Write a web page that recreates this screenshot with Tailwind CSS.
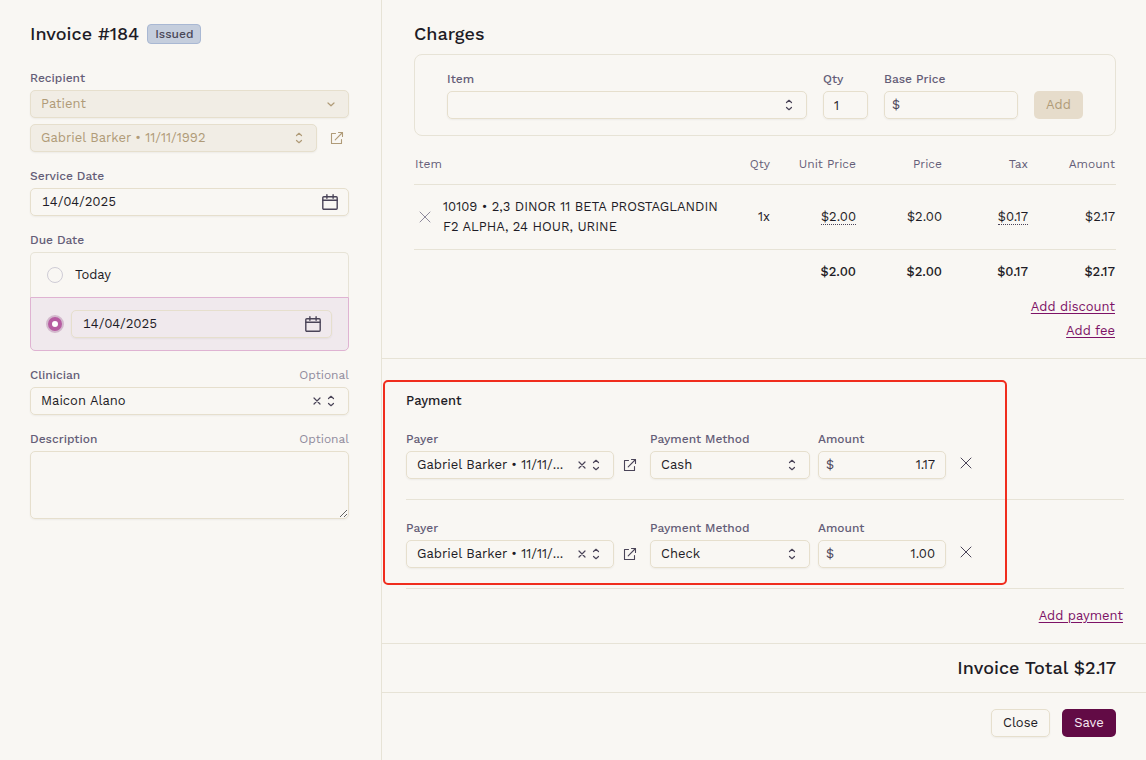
<!DOCTYPE html>
<html lang="en">
<head>
  <meta charset="UTF-8" />
  <meta name="viewport" content="width=device-width, initial-scale=1.0" />
  <title>Invoice #184</title>
  <script src="https://cdn.jsdelivr.net/npm/@tailwindcss/browser@4"></script>
</head>
<body class="flex min-h-screen bg-[#f9f7f3] font-['Work_Sans','Inter',sans-serif] text-[13px] leading-5 text-[#1e1c26]">

  <!-- Icons -->
  <svg class="hidden">
    <symbol id="icon-updown" viewBox="0 0 12 12" fill="none" stroke="currentColor" stroke-width="1.2" stroke-linecap="round" stroke-linejoin="round">
      <path d="M3.5 3.5 6 1.3l2.5 2.2M3.5 8.5 6 10.7l2.5-2.2" />
    </symbol>
    <symbol id="icon-down" viewBox="0 0 12 12" fill="none" stroke="currentColor" stroke-width="1.2" stroke-linecap="round" stroke-linejoin="round">
      <path d="M3 5 6 7.8l3-2.8" />
    </symbol>
    <symbol id="icon-clear" viewBox="0 0 12 12" fill="none" stroke="currentColor" stroke-width="1.2" stroke-linecap="round">
      <path d="M3 3l6 6M9 3l-6 6" />
    </symbol>
    <symbol id="icon-x" viewBox="0 0 12 12" fill="none" stroke="currentColor" stroke-width="1" stroke-linecap="round">
      <path d="M1 1l10 10M11 1 1 11" />
    </symbol>
    <symbol id="icon-open" viewBox="0 0 14 14" fill="none" stroke="currentColor" stroke-width="1.1" stroke-linecap="round" stroke-linejoin="round">
      <path d="M5.5 2.5H1.5V12.5H11.5V8.5M8.5 1.5h4v4M12.5 1.5 5.2 8.8" />
    </symbol>
    <symbol id="icon-calendar" viewBox="0 0 16 16" fill="none" stroke="currentColor" stroke-width="1.4" stroke-linecap="round" stroke-linejoin="round">
      <rect x="0.8" y="2.7" width="14.4" height="12.5" rx="1" />
      <path d="M0.8 6.3h14.4M4.9 0.7v3.6M11.1 0.7v3.6" />
    </symbol>
  </svg>

  <!-- Invoice details -->
  <aside class="w-1/3 shrink-0 border-r border-[#e7e3d6] pt-5 pr-8 pl-[30px]">
    <div class="mb-[22px] flex h-7 items-center gap-2">
      <h1 class="text-lg font-medium">Invoice #184</h1>
      <span class="rounded border border-[#a9b8d3] bg-[#c5cedd] px-[7px] text-xs leading-[18px] font-medium text-[#4a4858]">Issued</span>
    </div>

    <form class="flex flex-col gap-4">
      <div>
        <label for="recipient-type" class="mb-1 block text-xs leading-4 font-medium text-[#655e78]">Recipient</label>
        <div class="relative mb-1.5">
          <select id="recipient-type" disabled class="block h-7 w-full appearance-none rounded-[5px] border border-[#e6dfcd] bg-[#f1ede5] px-2.5 text-[#b09b78] opacity-100 shadow-xs">
            <option>Patient</option>
          </select>
          <svg class="pointer-events-none absolute top-2 right-3 size-3 text-[#b09b78]"><use href="#icon-down" /></svg>
        </div>
        <div class="flex items-center gap-2">
          <div class="relative flex-1">
            <select aria-label="Patient" disabled class="block h-7 w-full appearance-none rounded-[5px] border border-[#e6dfcd] bg-[#f1ede5] px-2.5 text-[#b09b78] opacity-100 shadow-xs">
              <option>Gabriel Barker • 11/11/1992</option>
            </select>
            <svg class="pointer-events-none absolute top-2 right-3 size-3 text-[#b09b78]"><use href="#icon-updown" /></svg>
          </div>
          <a href="#" aria-label="Open patient" class="flex w-6 justify-center text-[#b09b78]"><svg class="size-3.5"><use href="#icon-open" /></svg></a>
        </div>
      </div>

      <div>
        <label for="service-date" class="mb-1 block text-xs leading-4 font-medium text-[#655e78]">Service Date</label>
        <div class="flex h-7 items-center rounded-[5px] border border-[#e6dfcd] px-2.5 shadow-xs">
          <input id="service-date" type="text" value="14/04/2025" class="min-w-0 flex-1 pl-px tabular-nums outline-none" />
          <button type="button" aria-label="Pick service date" class="text-[#4a4458]"><svg class="size-4"><use href="#icon-calendar" /></svg></button>
        </div>
      </div>

      <fieldset>
        <legend class="mb-1 text-xs leading-4 font-medium text-[#655e78]">Due Date</legend>
        <label class="flex items-center gap-3 rounded-t-[5px] border border-b-0 border-[#e7e3d6] px-4 py-3">
          <input type="radio" name="due" class="size-4 appearance-none rounded-full border border-[#cfccd6]" />
          Today
        </label>
        <div class="flex items-center gap-2 rounded-b-[5px] border border-[#dfb3d2] bg-[#f0e9ed] px-4 py-3">
          <input type="radio" name="due" checked aria-label="Due on a date" class="size-4 appearance-none rounded-full border-[5px] border-[#b75ca2] bg-white outline-2 -outline-offset-1 outline-[#d3b9cd]" />
          <div class="flex h-7 flex-1 items-center rounded-[5px] border border-[#e6dfcd] px-2.5 shadow-xs">
            <input type="text" aria-label="Due date" value="14/04/2025" class="min-w-0 flex-1 pl-px tabular-nums outline-none" />
            <button type="button" aria-label="Pick due date" class="text-[#4a4458]"><svg class="size-4"><use href="#icon-calendar" /></svg></button>
          </div>
        </div>
      </fieldset>

      <div>
        <div class="mb-1 flex justify-between text-xs leading-4 text-[#8f8a9c]">
          <label for="clinician" class="font-medium text-[#655e78]">Clinician</label>
          <span>Optional</span>
        </div>
        <div class="relative">
          <select id="clinician" class="block h-7 w-full appearance-none rounded-[5px] border border-[#e6dfcd] px-2.5 shadow-xs">
            <option>Maicon Alano</option>
          </select>
          <button type="button" aria-label="Clear clinician" class="absolute top-2 right-[26px] text-[#4a4458]"><svg class="size-3"><use href="#icon-clear" /></svg></button>
          <svg class="pointer-events-none absolute top-2 right-3 size-3 text-[#4a4458]"><use href="#icon-updown" /></svg>
        </div>
      </div>

      <div>
        <div class="mb-1 flex justify-between text-xs leading-4 text-[#8f8a9c]">
          <label for="description" class="font-medium text-[#655e78]">Description</label>
          <span>Optional</span>
        </div>
        <textarea id="description" class="block h-[68px] w-full rounded-[5px] border border-[#e6dfcd] px-2.5 py-1 shadow-xs"></textarea>
      </div>
    </form>
  </aside>

  <main class="min-w-0 flex-1">
    <!-- Charges -->
    <section class="pt-5 pr-[30px] pb-[15px] pl-8">
      <h2 class="mb-1.5 text-lg leading-7 font-medium">Charges</h2>
      <form class="mb-2 flex items-end gap-4 rounded-lg border border-[#e7e3d6] px-8 py-4">
        <div class="flex-1">
          <label for="item" class="mb-1 block text-xs leading-4 font-medium text-[#655e78]">Item</label>
          <div class="relative">
            <select id="item" class="block h-7 w-full appearance-none rounded-[5px] border border-[#e6dfcd] px-2.5 shadow-xs">
              <option></option>
            </select>
            <svg class="pointer-events-none absolute top-2 right-3 size-3 text-[#4a4458]"><use href="#icon-updown" /></svg>
          </div>
        </div>
        <div>
          <label for="qty" class="mb-1 block text-xs leading-4 font-medium text-[#655e78]">Qty</label>
          <input id="qty" type="text" value="1" class="block h-7 w-[45px] rounded-[5px] border border-[#e6dfcd] px-2.5 leading-5 shadow-xs" />
        </div>
        <div>
          <label for="base-price" class="mb-1 block text-xs leading-4 font-medium text-[#655e78]">Base Price</label>
          <div class="flex h-7 w-[134px] items-center gap-1 rounded-[5px] border border-[#e6dfcd] px-[7px] shadow-xs">
            <span class="text-[#4a4458]">$</span>
            <input id="base-price" type="text" class="min-w-0 flex-1 outline-none" />
          </div>
        </div>
        <button type="button" disabled class="h-7 w-[49px] rounded-[5px] bg-[#e6dccb] text-[#b09b78]">Add</button>
      </form>

      <table class="w-full table-fixed text-right">
        <thead>
          <tr class="border-b border-[#e7e3d6] text-xs leading-4 text-[#655e78]">
            <th class="px-px py-3 text-left font-normal">Item</th>
            <th class="w-10 px-px py-3 font-normal">Qty</th>
            <th class="w-[86px] px-px py-3 font-normal">Unit Price</th>
            <th class="w-[86px] px-px py-3 font-normal">Price</th>
            <th class="w-[86px] px-px py-3 font-normal">Tax</th>
            <th class="w-[87px] px-px py-3 font-normal">Amount</th>
          </tr>
        </thead>
        <tbody>
          <tr class="border-b border-[#e7e3d6]">
            <td class="px-px py-3 text-left">
              <div class="flex items-center gap-3 pl-1">
                <button type="button" aria-label="Remove item" class="text-[#8f8a9c]"><svg class="size-3"><use href="#icon-x" /></svg></button>
                <span>10109 • 2,3 DINOR 11 BETA PROSTAGLANDIN F2 ALPHA, 24 HOUR, URINE</span>
              </div>
            </td>
            <td class="px-px">1x</td>
            <td class="px-px"><span class="border-b border-dotted border-[#4a4458]">$2.00</span></td>
            <td class="px-px">$2.00</td>
            <td class="px-px"><span class="border-b border-dotted border-[#4a4458]">$0.17</span></td>
            <td class="px-px">$2.17</td>
          </tr>
        </tbody>
        <tfoot>
          <tr class="font-medium">
            <td class="px-px py-3" colspan="3">$2.00</td>
            <td class="px-px">$2.00</td>
            <td class="px-px">$0.17</td>
            <td class="px-px">$2.17</td>
          </tr>
        </tfoot>
      </table>

      <div class="flex flex-col items-end pt-px pr-px leading-6 text-[#7d1266]">
        <a href="#" class="underline underline-offset-2">Add discount</a>
        <a href="#" class="underline underline-offset-2">Add fee</a>
      </div>
    </section>

    <!-- Payment -->
    <section class="relative border-t border-[#e7e3d6] pt-8 pr-[22px] pb-4 pl-6">
      <h3 class="font-medium">Payment</h3>

      <div class="flex items-end border-b border-[#e7e3d6] py-5">
        <div class="w-[208px]">
          <label for="payer-1" class="mb-1 block text-xs leading-4 font-medium text-[#655e78]">Payer</label>
          <div class="relative">
            <select id="payer-1" class="block h-7 w-full appearance-none rounded-[5px] border border-[#e6dfcd] pr-11 pl-2.5 shadow-xs">
              <option>Gabriel Barker • 11/11/...</option>
            </select>
            <button type="button" aria-label="Clear payer" class="absolute top-2 right-[26px] text-[#4a4458]"><svg class="size-3"><use href="#icon-clear" /></svg></button>
            <svg class="pointer-events-none absolute top-2 right-3 size-3 text-[#4a4458]"><use href="#icon-updown" /></svg>
          </div>
        </div>
        <a href="#" aria-label="Open payer" class="mr-2 ml-1 flex h-7 w-6 items-center justify-center text-[#4a4458]"><svg class="size-3.5"><use href="#icon-open" /></svg></a>
        <div class="mr-2 w-40">
          <label for="method-1" class="mb-1 block text-xs leading-4 font-medium text-[#655e78]">Payment Method</label>
          <div class="relative">
            <select id="method-1" class="block h-7 w-full appearance-none rounded-[5px] border border-[#e6dfcd] px-2.5 shadow-xs">
              <option>Cash</option>
            </select>
            <svg class="pointer-events-none absolute top-2 right-3 size-3 text-[#4a4458]"><use href="#icon-updown" /></svg>
          </div>
        </div>
        <div class="w-32">
          <label for="amount-1" class="mb-1 block text-xs leading-4 font-medium text-[#655e78]">Amount</label>
          <div class="flex h-7 items-center rounded-[5px] border border-[#e6dfcd] pr-2.5 pl-[7px] shadow-xs">
            <span class="text-[#4a4458]">$</span>
            <input id="amount-1" type="text" value="1.17" class="min-w-0 flex-1 text-right outline-none" />
          </div>
        </div>
        <button type="button" aria-label="Remove payment" class="ml-1 flex size-8 items-center justify-center text-[#4a4458]"><svg class="size-3"><use href="#icon-x" /></svg></button>
      </div>

      <div class="flex items-end border-b border-[#e7e3d6] py-5">
        <div class="w-[208px]">
          <label for="payer-2" class="mb-1 block text-xs leading-4 font-medium text-[#655e78]">Payer</label>
          <div class="relative">
            <select id="payer-2" class="block h-7 w-full appearance-none rounded-[5px] border border-[#e6dfcd] pr-11 pl-2.5 shadow-xs">
              <option>Gabriel Barker • 11/11/...</option>
            </select>
            <button type="button" aria-label="Clear payer" class="absolute top-2 right-[26px] text-[#4a4458]"><svg class="size-3"><use href="#icon-clear" /></svg></button>
            <svg class="pointer-events-none absolute top-2 right-3 size-3 text-[#4a4458]"><use href="#icon-updown" /></svg>
          </div>
        </div>
        <a href="#" aria-label="Open payer" class="mr-2 ml-1 flex h-7 w-6 items-center justify-center text-[#4a4458]"><svg class="size-3.5"><use href="#icon-open" /></svg></a>
        <div class="mr-2 w-40">
          <label for="method-2" class="mb-1 block text-xs leading-4 font-medium text-[#655e78]">Payment Method</label>
          <div class="relative">
            <select id="method-2" class="block h-7 w-full appearance-none rounded-[5px] border border-[#e6dfcd] px-2.5 shadow-xs">
              <option>Check</option>
            </select>
            <svg class="pointer-events-none absolute top-2 right-3 size-3 text-[#4a4458]"><use href="#icon-updown" /></svg>
          </div>
        </div>
        <div class="w-32">
          <label for="amount-2" class="mb-1 block text-xs leading-4 font-medium text-[#655e78]">Amount</label>
          <div class="flex h-7 items-center rounded-[5px] border border-[#e6dfcd] pr-2.5 pl-[7px] shadow-xs">
            <span class="text-[#4a4458]">$</span>
            <input id="amount-2" type="text" value="1.00" class="min-w-0 flex-1 text-right outline-none" />
          </div>
        </div>
        <button type="button" aria-label="Remove payment" class="ml-1 flex size-8 items-center justify-center text-[#4a4458]"><svg class="size-3"><use href="#icon-x" /></svg></button>
      </div>

      <div class="pt-4 pr-px text-right leading-[22px] text-[#7d1266]">
        <a href="#" class="underline underline-offset-2">Add payment</a>
      </div>

      <!-- Highlight -->
      <div class="pointer-events-none absolute top-[21px] left-px h-[205px] w-[624px] rounded-[5px] border-2 border-[#f02d1d]"></div>
    </section>

    <!-- Total -->
    <div class="border-t border-[#e7e3d6] pr-[30px] text-right text-lg leading-[48px] font-medium">Invoice Total $2.17</div>

    <footer class="flex justify-end gap-3 border-t border-[#e7e3d6] pt-4 pr-[30px]">
      <button type="button" class="h-7 w-[59px] rounded-[5px] border border-[#e6dfcd] shadow-xs">Close</button>
      <button type="submit" class="h-7 w-[54px] rounded-[5px] bg-[#620b45] text-[#f6e9f2]">Save</button>
    </footer>
  </main>
</body>
</html>
